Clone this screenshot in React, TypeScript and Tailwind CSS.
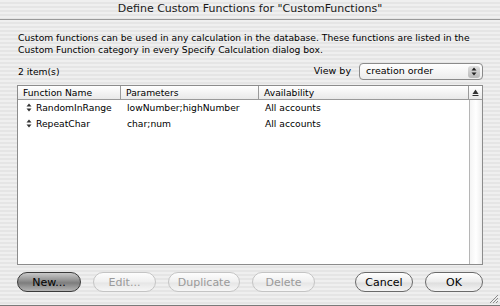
import React from "react";

const stripe =
  "bg-[image:repeating-linear-gradient(180deg,#efefef_0px,#efefef_2px,#e5e5e5_2px,#e5e5e5_4px)]";

function UpDown() {
  return (
    <svg width="6" height="9" viewBox="0 0 6 9" className="shrink-0">
      <path d="M3 0.5 L5.5 3.5 L0.5 3.5 Z" fill="#333" />
      <path d="M3 8.5 L5.5 5.5 L0.5 5.5 Z" fill="#333" />
    </svg>
  );
}

function Btn({
  label,
  w,
  disabled,
  dark,
}: {
  label: string;
  w: string;
  disabled?: boolean;
  dark?: boolean;
}) {
  const base =
    "h-[20px] rounded-full flex items-center justify-center text-[11px] leading-none border";
  let cls = "";
  if (dark)
    cls =
      "border-[#3a3a3a] bg-[linear-gradient(180deg,#c9c9c9_0%,#8d8d8d_45%,#7d7d7d_55%,#b5b5b5_100%)] text-black";
  else if (disabled)
    cls =
      "border-[#c4c4c4] bg-[linear-gradient(180deg,#fdfdfd_0%,#efefef_50%,#e6e6e6_55%,#f6f6f6_100%)] text-[#9a9a9a]";
  else
    cls =
      "border-[#6a6a6a] bg-[linear-gradient(180deg,#ffffff_0%,#ececec_50%,#dedede_55%,#f4f4f4_100%)] text-black";
  return <div className={`${base} ${cls} ${w}`}>{label}</div>;
}

export default function App() {
  return (
    <div
      className={`w-[500px] h-[306px] ${stripe} flex flex-col border-b border-[#7a7a7a] text-black overflow-hidden relative`}
      style={{ fontFamily: '"DejaVu Sans", sans-serif' }}
    >
      {/* title bar */}
      <div className="h-[20px] flex items-center justify-center border-b border-[#9a9a9a] text-[11px] text-[#1a1a1a] shrink-0">
        Define Custom Functions for "CustomFunctions"
      </div>

      <div className="flex flex-col px-[17px] pt-[12px] flex-1">
        <div className="text-[9.2px] leading-[12px] pl-[1px]">
          Custom functions can be used in any calculation in the database. These functions are listed in the
          <br />
          Custom Function category in every Specify Calculation dialog box.
        </div>

        <div className="flex items-center justify-between mt-[7px] h-[17px]">
          <div className="text-[9.2px] pl-[1px]">2 item(s)</div>
          <div className="flex items-center gap-[8px]">
            <span className="text-[9.5px]">View by</span>
            <div className="w-[124px] h-[17px] rounded-[4px] border border-[#8a8a8a] bg-[linear-gradient(180deg,#ffffff,#ececec)] flex items-center justify-between pl-[6px] pr-[2px]">
              <span className="text-[9.5px]">creation order</span>
              <div className="w-[12px] h-[12px] rounded-[3px] bg-[linear-gradient(180deg,#e0e0e0,#b9b9b9)] flex flex-col items-center justify-center">
                <svg width="6" height="9" viewBox="0 0 6 9">
                  <path d="M3 0.5 L5.5 3.5 L0.5 3.5 Z" fill="#222" />
                  <path d="M3 8.5 L5.5 5.5 L0.5 5.5 Z" fill="#222" />
                </svg>
              </div>
            </div>
          </div>
        </div>

        {/* table */}
        <div className="mt-[5px] h-[180px] border border-[#8c8c8c] bg-white flex flex-col">
          <div className="h-[14px] flex border-b border-[#9a9a9a] bg-[linear-gradient(180deg,#ffffff,#e9e9e9)] text-[9.2px] leading-[13px] shrink-0">
            <div className="w-[103px] border-r border-[#9a9a9a] pl-[5px]">Function Name</div>
            <div className="w-[138px] border-r border-[#9a9a9a] pl-[5px]">Parameters</div>
            <div className="flex-1 border-r border-[#9a9a9a] pl-[5px]">Availability</div>
            <div className="w-[13px] flex items-center justify-center">
              <svg width="7" height="7" viewBox="0 0 7 7">
                <path d="M3.5 0.5 L6.5 5 L0.5 5 Z" fill="#333" />
                <rect x="0.5" y="6" width="6" height="1" fill="#333" />
              </svg>
            </div>
          </div>
          <div className="flex flex-1">
            <div className="flex-1 flex flex-col text-[9.2px]">
              {[
                ["RandomInRange", "lowNumber;highNumber"],
                ["RepeatChar", "char;num"],
              ].map(([n, p]) => (
                <div key={n} className="flex h-[16px] items-center">
                  <div className="w-[103px] flex items-center pl-[8px] gap-[4px]">
                    <UpDown />
                    <span>{n}</span>
                  </div>
                  <div className="w-[138px] pl-[6px]">{p}</div>
                  <div className="pl-[6px]">All accounts</div>
                </div>
              ))}
            </div>
            <div className="w-[13px] border-l border-[#b5b5b5] bg-[linear-gradient(90deg,#f4f4f4,#ffffff,#eeeeee)]" />
          </div>
        </div>

        {/* buttons */}
        <div className="flex items-center mt-[7px]">
          <Btn label="New..." w="w-[64px]" dark />
          <div className="ml-[12px]">
            <Btn label="Edit..." w="w-[63px]" disabled />
          </div>
          <div className="ml-[12px]">
            <Btn label="Duplicate" w="w-[72px]" disabled />
          </div>
          <div className="ml-[12px]">
            <Btn label="Delete" w="w-[63px]" disabled />
          </div>
          <div className="ml-auto">
            <Btn label="Cancel" w="w-[58px]" />
          </div>
          <div className="ml-[12px]">
            <Btn label="OK" w="w-[58px]" />
          </div>
        </div>
      </div>

      {/* resize grip */}
      <svg
        className="absolute right-[1px] bottom-[1px]"
        width="11"
        height="11"
        viewBox="0 0 11 11"
      >
        <path d="M10 2 L2 10 M10 5 L5 10 M10 8 L8 10" stroke="#8a8a8a" strokeWidth="1" />
      </svg>
    </div>
  );
}
